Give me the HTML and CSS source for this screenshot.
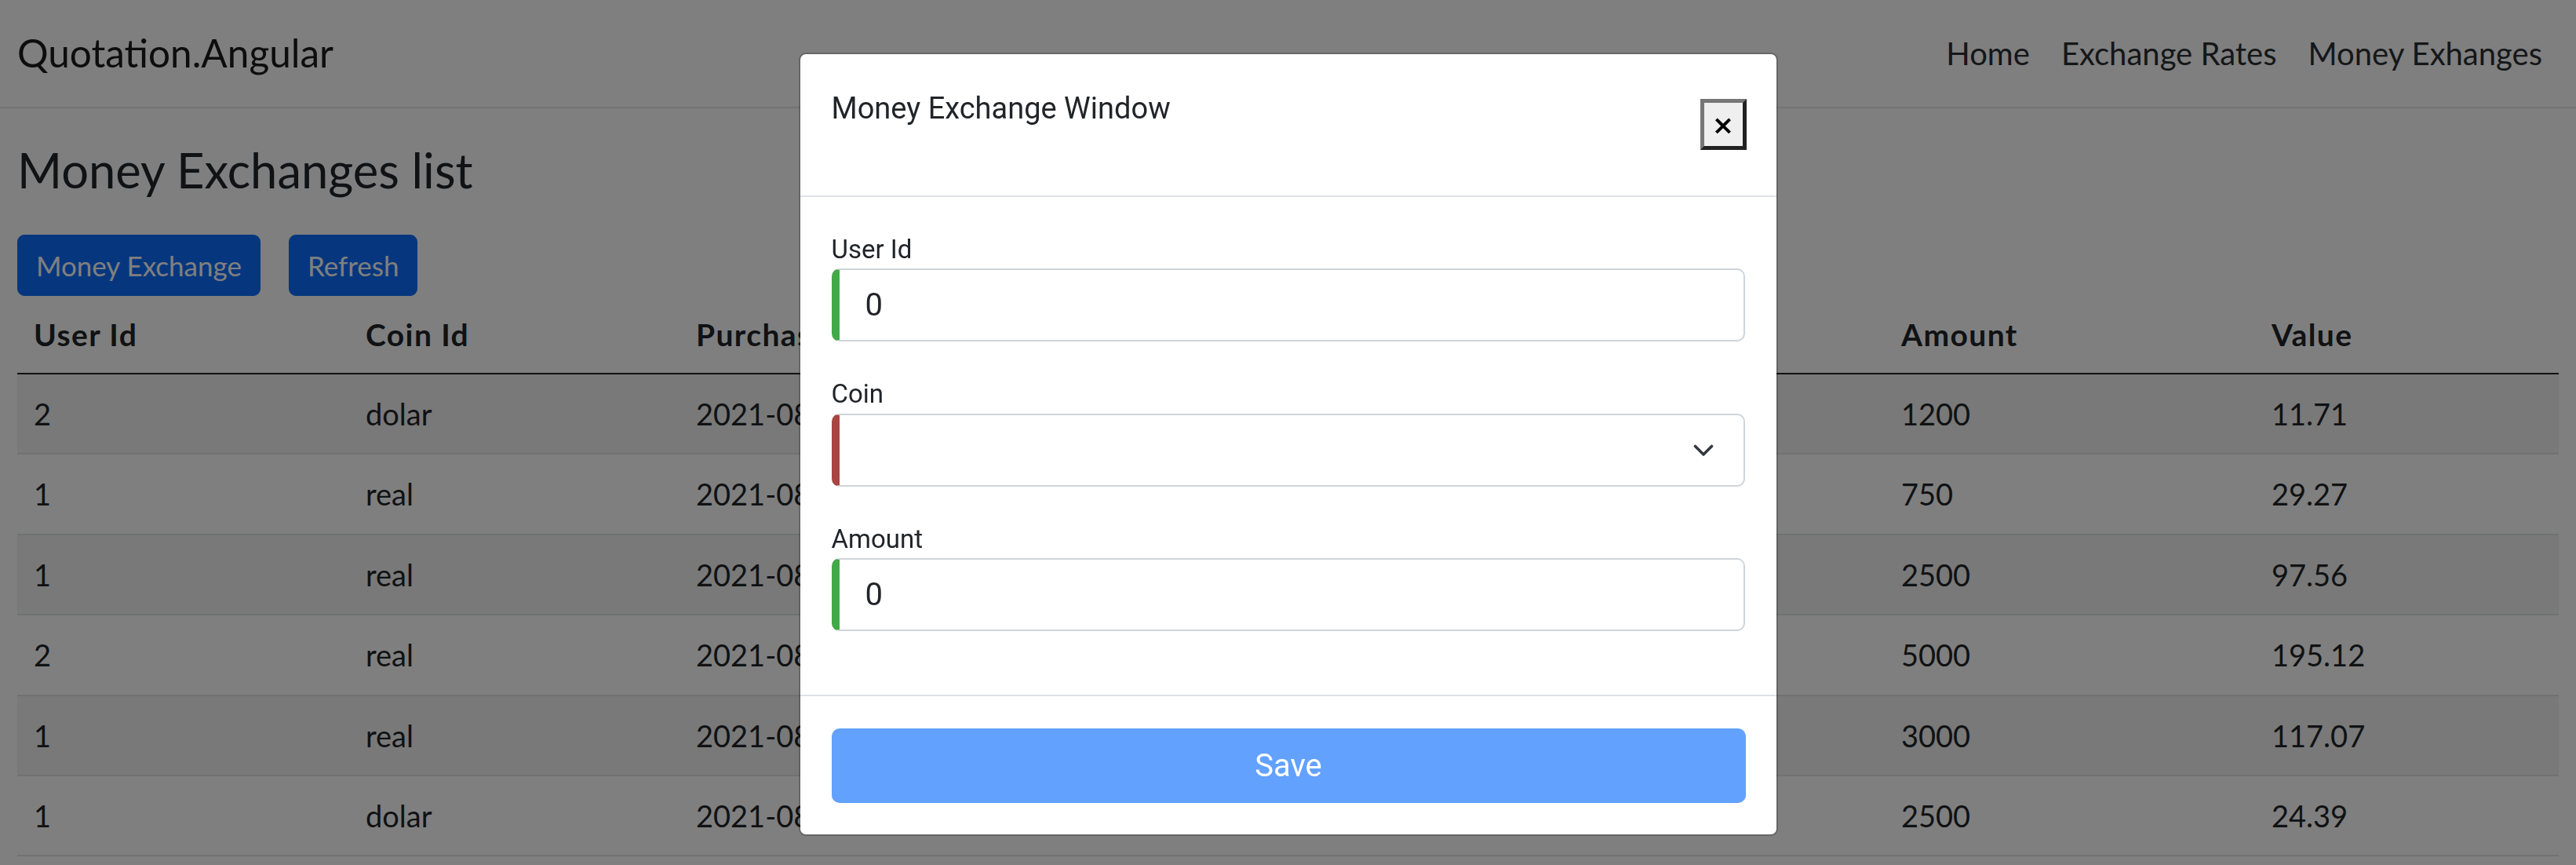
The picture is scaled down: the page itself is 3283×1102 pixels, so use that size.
FILE: index.html
```html
<!DOCTYPE html>
<html lang="en">
<head>
<meta charset="utf-8">
<title>Quotation.Angular</title>
<link rel="stylesheet" href="styles.css">
</head>
<body>
<div class="app">
  <nav class="navbar">
    <a class="brand" href="#">Quotation.Angular</a>
    <div class="nav">
      <a class="nav-link" href="#">Home</a>
      <a class="nav-link" href="#">Exchange Rates</a>
      <a class="nav-link" href="#">Money Exhanges</a>
    </div>
  </nav>
  <main class="main">
    <h4 class="title">Money Exchanges list</h4>
    <div class="actions">
      <button class="btn" type="button">Money Exchange</button>
      <button class="btn" type="button">Refresh</button>
    </div>
    <table class="table">
      <colgroup>
        <col class="c1"><col class="c2"><col class="c3"><col class="c4"><col class="c5"><col class="c6">
      </colgroup>
      <thead>
        <tr><th>User Id</th><th>Coin Id</th><th>Purchase Date</th><th>Coin Rate</th><th>Amount</th><th>Value</th></tr>
      </thead>
      <tbody>
        <tr><td>2</td><td>dolar</td><td>2021-08-22</td><td>102.47</td><td>1200</td><td>11.71</td></tr>
        <tr><td>1</td><td>real</td><td>2021-08-22</td><td>25.62</td><td>750</td><td>29.27</td></tr>
        <tr><td>1</td><td>real</td><td>2021-08-22</td><td>25.62</td><td>2500</td><td>97.56</td></tr>
        <tr><td>2</td><td>real</td><td>2021-08-22</td><td>25.62</td><td>5000</td><td>195.12</td></tr>
        <tr><td>1</td><td>real</td><td>2021-08-22</td><td>25.62</td><td>3000</td><td>117.07</td></tr>
        <tr><td>1</td><td>dolar</td><td>2021-08-22</td><td>102.47</td><td>2500</td><td>24.39</td></tr>
      </tbody>
    </table>
  </main>
</div>

<div class="backdrop"></div>

<div class="modal-wrap">
  <div class="modal">
    <div class="modal-header">
      <h5 class="modal-title">Money Exchange Window</h5>
      <button class="close" type="button">&times;</button>
    </div>
    <div class="modal-body">
      <div class="group">
        <label class="label" for="userId">User Id</label>
        <input class="control valid" id="userId" type="text" value="0">
      </div>
      <div class="group">
        <label class="label" for="coin">Coin</label>
        <div class="select-wrap">
          <select class="control invalid" id="coin"><option value=""></option></select>
          <svg class="chevron" width="26" height="16" viewBox="0 0 26 16"><polyline points="2.5,2.5 13,13 23.5,2.5" fill="none" stroke="#343a40" stroke-width="3.6" stroke-linecap="round" stroke-linejoin="round"/></svg>
        </div>
      </div>
      <div class="group">
        <label class="label" for="amount">Amount</label>
        <input class="control valid" id="amount" type="text" value="0">
      </div>
    </div>
    <div class="modal-footer">
      <button class="save" type="button">Save</button>
    </div>
  </div>
</div>
</body>
</html>
```

FILE: styles.css
```css
html, body {
  margin: 0;
  padding: 0;
  overflow: hidden;
  background: #ffffff;
}

body {
  font-family: Lato, "Liberation Sans", sans-serif;
  color: #212529;
}

.navbar {
  height: 136px;
  border-bottom: 2px solid #e6e6e6;
  display: flex;
  align-items: center;
  justify-content: space-between;
  padding: 0 22px;
}

.brand {
  font-size: 49.5px;
  line-height: 1.2;
  color: #1a1a1a;
  text-decoration: none;
}

.nav {
  display: flex;
}

.nav-link {
  padding: 0 20px;
  font-size: 40px;
  line-height: 1.2;
  color: #2a2e33;
  text-decoration: none;
}

.nav-link:last-child {
  padding-right: 21px;
}

.main {
  padding: 0 22px;
}

.title {
  font-size: 61.5px;
  font-weight: 400;
  line-height: 71px;
  margin: 43px 0 47px;
}

.actions {
  display: flex;
  gap: 36px;
}

.btn {
  font-family: Lato, "Liberation Sans", sans-serif;
  font-size: 35px;
  line-height: 52px;
  padding: 12px 23px;
  border: 1px solid #0d6efd;
  border-radius: 9px;
  background: #0d6efd;
  color: #ffffff;
}

.table {
  width: 100%;
  border-collapse: collapse;
  table-layout: fixed;
}

.c1 { width: 423px; }
.c2 { width: 421px; }
.c3 { width: 768px; }
.c4 { width: 768px; }
.c5 { width: 472px; }
.c6 { width: auto; }

.table th {
  text-align: left;
  font-size: 39px;
  font-weight: 700;
  letter-spacing: 1.4px;
  padding: 23px 21px;
  line-height: 52px;
  border-bottom: 2px solid #212529;
  white-space: nowrap;
  overflow: hidden;
}

.table td {
  font-size: 38px;
  padding: 24px 21px;
  line-height: 52.4px;
  border-bottom: 2px solid #dee2e6;
  white-space: nowrap;
  overflow: hidden;
}

.table tbody tr:nth-child(odd) {
  background: #f2f2f2;
}

.backdrop {
  position: fixed;
  inset: 0;
  background: rgba(0, 0, 0, 0.5);
}

.modal-wrap {
  position: fixed;
  inset: 0;
  display: flex;
  justify-content: center;
  align-items: flex-start;
  padding-top: 67px;
}

.modal {
  width: 1248px;
  box-sizing: border-box;
  background: #ffffff;
  background-clip: padding-box;
  border: 2px solid rgba(0, 0, 0, 0.2);
  border-radius: 9px;
  font-family: Roboto, "Liberation Sans", sans-serif;
  color: #212529;
}

.modal-header {
  display: flex;
  justify-content: space-between;
  align-items: flex-start;
  padding: 41px 38px 40px 40px;
  border-bottom: 2px solid #dee2e6;
}

.modal-title {
  margin: 0;
  font-size: 38px;
  font-weight: 400;
  line-height: 57px;
}

.close {
  width: 59px;
  height: 65px;
  margin: 16px 0 18px;
  padding: 0;
  box-sizing: border-box;
  border-width: 5px;
  border-style: solid;
  border-color: #777777 #222222 #222222 #777777;
  background: #efefef;
  color: #000000;
  font-family: "DejaVu Sans", sans-serif;
  font-size: 34px;
  font-weight: 700;
  line-height: 52px;
  text-align: center;
}

.modal-body {
  padding: 41.5px 40px 39px;
}

.group {
  margin-bottom: 42px;
}

.label {
  display: block;
  font-size: 33px;
  line-height: 49.5px;
}

.control {
  display: block;
  width: 100%;
  height: 93px;
  box-sizing: border-box;
  margin: 0;
  padding: 0 30px 0 33px;
  border: 2px solid #ced4da;
  border-radius: 10px;
  background: #ffffff;
  font-family: Roboto, "Liberation Sans", sans-serif;
  font-size: 40px;
  color: #212529;
  outline: none;
  appearance: none;
  -webkit-appearance: none;
}

.valid {
  border-left: 10.5px solid #42a948;
}

.invalid {
  border-left: 10.5px solid #a94442;
}

.select-wrap {
  position: relative;
}

.chevron {
  position: absolute;
  right: 40px;
  top: 39px;
}

.modal-footer {
  border-top: 2px solid #dee2e6;
  padding: 41px 39px 40px 40px;
}

.save {
  display: block;
  width: 100%;
  height: 95px;
  border: none;
  border-radius: 10px;
  background: #62a1fe;
  color: #ffffff;
  font-family: Roboto, "Liberation Sans", sans-serif;
  font-size: 40px;
}
```
